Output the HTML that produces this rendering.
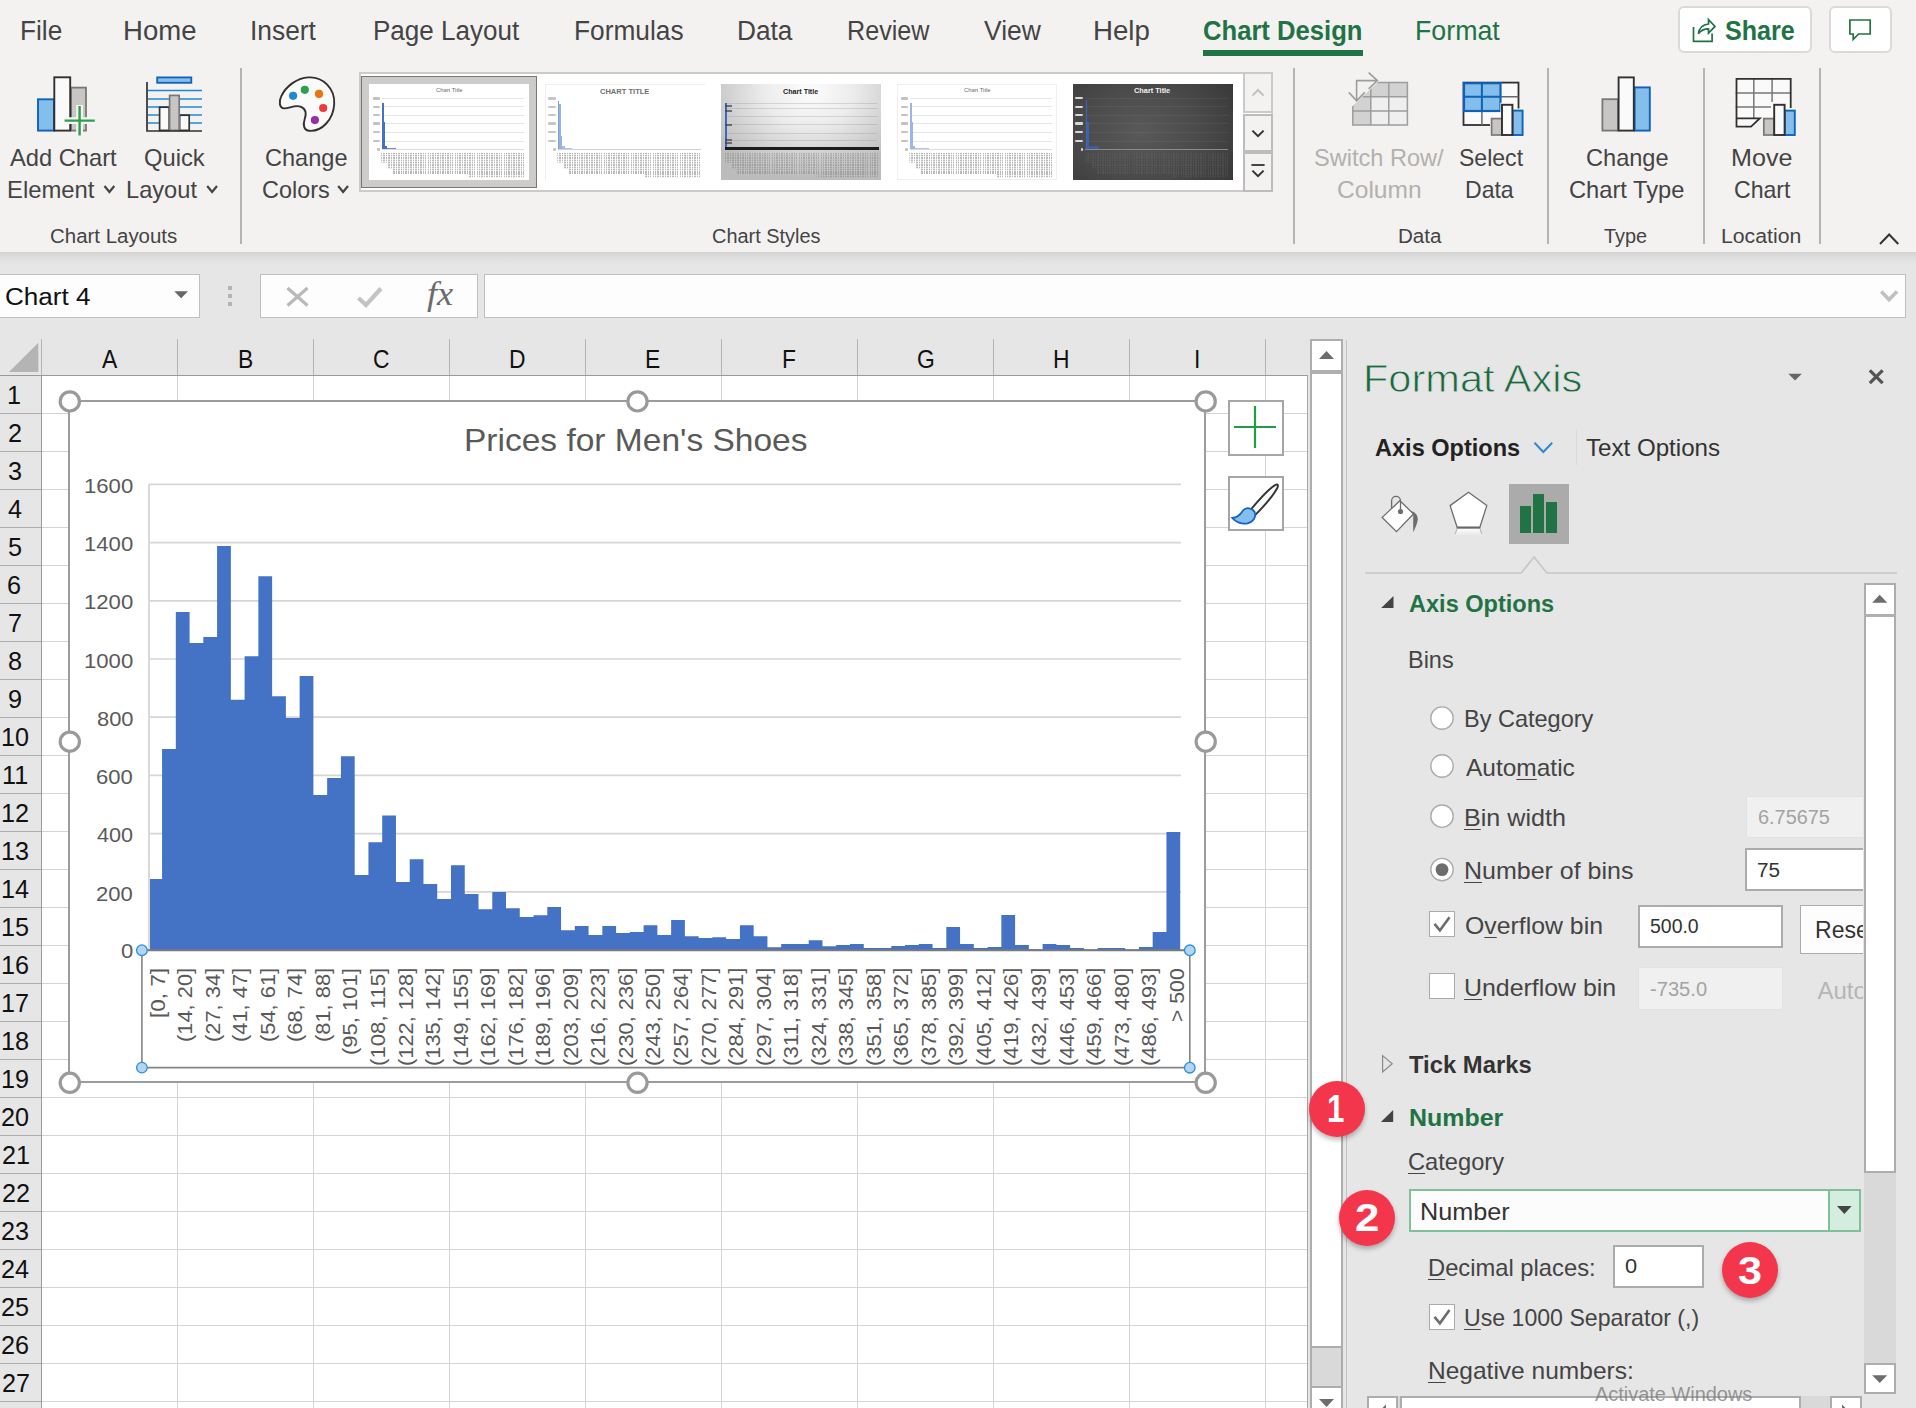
<!DOCTYPE html><html><head><meta charset="utf-8"><title>Excel</title><style>
*{margin:0;padding:0;box-sizing:border-box}
html,body{width:1916px;height:1408px;overflow:hidden;background:#e6e6e6}
body{position:relative;font-family:"Liberation Sans",sans-serif}
.a{position:absolute}
.t{position:absolute;white-space:nowrap;transform-origin:0 50%;font-family:"Liberation Sans",sans-serif}
svg{position:absolute;overflow:visible}
</style></head><body>
<div class="a" style="left:0px;top:0px;width:1916px;height:252px;background:#f3f2f1;"></div>
<div class="a" style="left:0px;top:252px;width:1916px;height:13px;background:linear-gradient(#d2d2d2,#dedede 40%,#e6e6e6);"></div>
<span class="t" style="left:19.90px;top:18px;font-size:27px;line-height:27px;color:#444;transform:scaleX(0.9717);">File</span>
<span class="t" style="left:123.10px;top:18px;font-size:27px;line-height:27px;color:#444;transform:scaleX(1.0201);">Home</span>
<span class="t" style="left:250.43px;top:18px;font-size:27px;line-height:27px;color:#444;transform:scaleX(0.9758);">Insert</span>
<span class="t" style="left:372.62px;top:18px;font-size:27px;line-height:27px;color:#444;transform:scaleX(0.9636);">Page Layout</span>
<span class="t" style="left:573.90px;top:18px;font-size:27px;line-height:27px;color:#444;transform:scaleX(0.9736);">Formulas</span>
<span class="t" style="left:737.30px;top:18px;font-size:27px;line-height:27px;color:#444;transform:scaleX(0.9716);">Data</span>
<span class="t" style="left:847.19px;top:18px;font-size:27px;line-height:27px;color:#444;transform:scaleX(0.9317);">Review</span>
<span class="t" style="left:984.20px;top:18px;font-size:27px;line-height:27px;color:#444;transform:scaleX(0.9783);">View</span>
<span class="t" style="left:1093.19px;top:18px;font-size:27px;line-height:27px;color:#444;transform:scaleX(1.0240);">Help</span>
<span class="t" style="left:1202.78px;top:18px;font-size:27px;line-height:27px;color:#217346;font-weight:bold;transform:scaleX(0.9489);">Chart Design</span>
<div class="a" style="left:1203px;top:50px;width:160px;height:5.5px;background:#217346;"></div>
<span class="t" style="left:1414.86px;top:18px;font-size:27px;line-height:27px;color:#217346;transform:scaleX(0.9916);">Format</span>
<div class="a" style="left:1678px;top:6px;width:134px;height:47px;background:#fff;border:2px solid #dcdad8;border-radius:6px;"></div>
<span class="t" style="left:1724.87px;top:18px;font-size:27px;line-height:27px;color:#217346;font-weight:bold;transform:scaleX(0.9296);">Share</span>
<div class="a" style="left:1829px;top:6px;width:63px;height:47px;background:#fff;border:2px solid #dcdad8;border-radius:6px;"></div>
<svg style="left:0;top:0" width="1" height="1" fill="none" stroke="#217346" stroke-width="1.7"><path d="M1693.5 27 V41.3 H1712.1 V33.4"/><path d="M1698.4 33.8 C1699 28.5 1702.5 24.6 1708.5 24 V19.6 L1715 26.4 L1708.5 33.2 V28.8 C1703.8 28.8 1700.6 30.6 1698.4 33.8 Z"/><path d="M1849.9 20 H1870.2 V34 H1858.6 L1853.2 39.4 V34 H1849.9 Z"/></svg>
<span class="t" style="left:10.30px;top:146px;font-size:24px;line-height:24px;color:#444;transform:scaleX(0.9870);">Add Chart</span>
<span class="t" style="left:7.09px;top:178px;font-size:24px;line-height:24px;color:#444;transform:scaleX(0.9937);">Element</span>
<span class="t" style="left:143.63px;top:146px;font-size:24px;line-height:24px;color:#444;transform:scaleX(0.9889);">Quick</span>
<span class="t" style="left:126.41px;top:178px;font-size:24px;line-height:24px;color:#444;transform:scaleX(0.9846);">Layout</span>
<span class="t" style="left:265.22px;top:146px;font-size:24px;line-height:24px;color:#444;transform:scaleX(0.9811);">Change</span>
<span class="t" style="left:261.53px;top:178px;font-size:24px;line-height:24px;color:#444;transform:scaleX(0.9759);">Colors</span>
<span class="t" style="left:1314.24px;top:146px;font-size:24px;line-height:24px;color:#b3b0ad;transform:scaleX(0.9821);">Switch Row/</span>
<span class="t" style="left:1336.97px;top:178px;font-size:24px;line-height:24px;color:#b3b0ad;transform:scaleX(1.0232);">Column</span>
<span class="t" style="left:1458.96px;top:146px;font-size:24px;line-height:24px;color:#444;transform:scaleX(0.9600);">Select</span>
<span class="t" style="left:1465.16px;top:178px;font-size:24px;line-height:24px;color:#444;transform:scaleX(0.9601);">Data</span>
<span class="t" style="left:1585.52px;top:146px;font-size:24px;line-height:24px;color:#444;transform:scaleX(0.9823);">Change</span>
<span class="t" style="left:1568.62px;top:178px;font-size:24px;line-height:24px;color:#444;transform:scaleX(0.9868);">Chart Type</span>
<span class="t" style="left:1731.39px;top:146px;font-size:24px;line-height:24px;color:#444;transform:scaleX(1.0466);">Move</span>
<span class="t" style="left:1733.85px;top:178px;font-size:24px;line-height:24px;color:#444;transform:scaleX(0.9621);">Chart</span>
<span class="t" style="left:49.68px;top:227px;font-size:19.5px;line-height:19.5px;color:#444;transform:scaleX(1.0481);">Chart Layouts</span>
<span class="t" style="left:712.40px;top:227px;font-size:19.5px;line-height:19.5px;color:#444;transform:scaleX(1.0209);">Chart Styles</span>
<span class="t" style="left:1398.45px;top:227px;font-size:19.5px;line-height:19.5px;color:#444;transform:scaleX(1.0556);">Data</span>
<span class="t" style="left:1604.30px;top:227px;font-size:19.5px;line-height:19.5px;color:#444;transform:scaleX(1.0207);">Type</span>
<span class="t" style="left:1721.30px;top:227px;font-size:19.5px;line-height:19.5px;color:#444;transform:scaleX(1.0889);">Location</span>
<div class="a" style="left:240px;top:68px;width:2px;height:176px;background:#b6b4b2;"></div>
<div class="a" style="left:1293px;top:68px;width:2px;height:176px;background:#b6b4b2;"></div>
<div class="a" style="left:1547px;top:68px;width:2px;height:176px;background:#b6b4b2;"></div>
<div class="a" style="left:1703px;top:68px;width:2px;height:176px;background:#b6b4b2;"></div>
<div class="a" style="left:1819px;top:68px;width:2px;height:176px;background:#b6b4b2;"></div>
<svg style="left:0;top:0" width="1" height="1"><path d="M104.5 186 L109.4 192 L114.3 186" fill="none" stroke="#444" stroke-width="2.2"/></svg>
<svg style="left:0;top:0" width="1" height="1"><path d="M207.2 186 L212.1 192 L217 186" fill="none" stroke="#444" stroke-width="2.2"/></svg>
<svg style="left:0;top:0" width="1" height="1"><path d="M338.2 186 L343.1 192 L348 186" fill="none" stroke="#444" stroke-width="2.2"/></svg>
<svg style="left:0;top:0" width="1" height="1"><path d="M1880 244 L1889.15 234.5 L1898.3 244" fill="none" stroke="#333" stroke-width="2"/></svg>
<div class="a" style="left:359px;top:72px;width:914px;height:120px;background:#fff;border:2px solid #cccac8;"></div>
<div class="a" style="left:1243px;top:72px;width:30px;height:41px;background:#f3f2f1;border:2px solid #cccac8;"></div>
<div class="a" style="left:1243px;top:114px;width:30px;height:38px;background:#f3f2f1;border:2px solid #bebcba;"></div>
<div class="a" style="left:1243px;top:152px;width:30px;height:40px;background:#f3f2f1;border:2px solid #bebcba;"></div>
<svg style="left:0;top:0" width="1" height="1" fill="none"><path d="M1252.4 95.6 L1258 90 L1263.6 95.6" stroke="#c3c1bf" stroke-width="2"/><path d="M1252.4 130.6 L1258 136.2 L1263.6 130.6" stroke="#323130" stroke-width="2"/><path d="M1251.4 165 H1264.6" stroke="#323130" stroke-width="1.8"/><path d="M1252.4 170.6 L1258 176.2 L1263.6 170.6" stroke="#323130" stroke-width="2"/></svg>
<div class="a" style="left:361.2px;top:76.4px;width:175.8px;height:111.6px;background:#cdccca;border:1.2px solid #777;"></div>
<div class="a" style="left:369.1px;top:84.3px;width:160px;height:95.3px;background:#fff;"></div><span class="t" style="left:435.81px;top:88px;font-size:5.6px;line-height:5.6px;color:#6a6a6a;transform:scaleX(1.0407);">Chart Title</span><div class="a" style="left:382.1px;top:98.0px;width:142px;height:0.9px;background:#e6e6e6;"></div><div class="a" style="left:382.1px;top:106.3px;width:142px;height:0.9px;background:#e6e6e6;"></div><div class="a" style="left:382.1px;top:114.89999999999999px;width:142px;height:0.9px;background:#e6e6e6;"></div><div class="a" style="left:382.1px;top:123.19999999999999px;width:142px;height:0.9px;background:#e6e6e6;"></div><div class="a" style="left:382.1px;top:131.79999999999998px;width:142px;height:0.9px;background:#e6e6e6;"></div><div class="a" style="left:382.1px;top:140.6px;width:142px;height:0.9px;background:#e6e6e6;"></div><div class="a" style="left:382.1px;top:149.1px;width:142px;height:0.9px;background:#dcdcdc;"></div><div class="a" style="left:372.6px;top:97.2px;width:7px;height:2.4px;background:#c2c2c2;border-radius:1px;"></div><div class="a" style="left:372.6px;top:105.5px;width:7px;height:2.4px;background:#c2c2c2;border-radius:1px;"></div><div class="a" style="left:372.6px;top:114.1px;width:7px;height:2.4px;background:#c2c2c2;border-radius:1px;"></div><div class="a" style="left:372.6px;top:122.39999999999999px;width:7px;height:2.4px;background:#c2c2c2;border-radius:1px;"></div><div class="a" style="left:372.6px;top:131.0px;width:7px;height:2.4px;background:#c2c2c2;border-radius:1px;"></div><div class="a" style="left:372.6px;top:139.8px;width:7px;height:2.4px;background:#c2c2c2;border-radius:1px;"></div><div class="a" style="left:372.6px;top:148.3px;width:2.5px;height:2.4px;background:#c2c2c2;border-radius:1px;left:377.1px;"></div><div class="a" style="left:382.1px;top:102.8px;width:1.5px;height:46.5px;background:#4472c4;"></div><div class="a" style="left:383.6px;top:122.4px;width:1.4px;height:27px;background:#4472c4;"></div><div class="a" style="left:385.0px;top:145.6px;width:1.5px;height:3.7px;background:#4472c4;"></div><div class="a" style="left:386.5px;top:148px;width:9px;height:1.3px;background:#4472c4;opacity:.8;"></div><div class="a" style="left:381.1px;top:153px;width:144.5px;height:24.6px;opacity:0.62;clip-path:polygon(0 0,100% 0,100% 100%,60% 100%,60% 85%,8% 85%,8% 65%,4% 65%,4% 40%,0 40%);background:repeating-linear-gradient(0deg,rgba(255,255,255,.65) 0 0.9px,transparent 0.9px 2.3px),repeating-linear-gradient(90deg,#909090 0 1.35px,transparent 1.35px 2.45px)"></div>
<div class="a" style="left:545.2px;top:84.3px;width:160px;height:95.3px;background:#fff;border:1px solid #ededed;border-bottom:none;border-right:none;"></div><span class="t" style="left:600.10px;top:89px;font-size:6.6px;line-height:6.6px;color:#6f6f6f;font-weight:bold;transform:scaleX(1.1418);">CHART TITLE</span><div class="a" style="left:548.2px;top:97.2px;width:7.5px;height:2.4px;background:#c6c6c6;border-radius:1px;"></div><div class="a" style="left:548.2px;top:105.5px;width:7.5px;height:2.4px;background:#c6c6c6;border-radius:1px;"></div><div class="a" style="left:548.2px;top:114.1px;width:7.5px;height:2.4px;background:#c6c6c6;border-radius:1px;"></div><div class="a" style="left:548.2px;top:122.39999999999999px;width:7.5px;height:2.4px;background:#c6c6c6;border-radius:1px;"></div><div class="a" style="left:548.2px;top:131.0px;width:7.5px;height:2.4px;background:#c6c6c6;border-radius:1px;"></div><div class="a" style="left:548.2px;top:139.8px;width:7.5px;height:2.4px;background:#c6c6c6;border-radius:1px;"></div><div class="a" style="left:548.2px;top:148.3px;width:2.5px;height:2.4px;background:#c6c6c6;border-radius:1px;left:553.2px;"></div><div class="a" style="left:558.2px;top:149px;width:143px;height:1px;background:#d2d2d2;"></div><div class="a" style="left:558.2px;top:101px;width:1.2px;height:48px;background:#7f9fd9;"></div><div class="a" style="left:559.4000000000001px;top:104px;width:1.3px;height:45px;background:#7f9fd9;opacity:.8;"></div><div class="a" style="left:560.7px;top:136px;width:1.4px;height:13px;background:#7f9fd9;opacity:.8;"></div><div class="a" style="left:562.1px;top:146px;width:2.5px;height:3px;background:#7f9fd9;opacity:.7;"></div><div class="a" style="left:564.6px;top:148px;width:7px;height:1.3px;background:#7f9fd9;opacity:.6;"></div><div class="a" style="left:557.2px;top:153px;width:144.5px;height:24.6px;opacity:0.62;clip-path:polygon(0 0,100% 0,100% 100%,60% 100%,60% 85%,8% 85%,8% 65%,4% 65%,4% 40%,0 40%);background:repeating-linear-gradient(0deg,rgba(255,255,255,.65) 0 0.9px,transparent 0.9px 2.3px),repeating-linear-gradient(90deg,#909090 0 1.35px,transparent 1.35px 2.45px)"></div>
<div class="a" style="left:721.4px;top:84.3px;width:159.6px;height:95.3px;background:radial-gradient(ellipse 70% 90% at 55% 8%,#fdfdfd 0,#ececec 40%,#cfcfcf 75%,#bcbcbc 100%);"></div><span class="t" style="left:783.11px;top:89px;font-size:6.8px;line-height:6.8px;color:#222;font-weight:bold;transform:scaleX(1.0512);">Chart Title</span><div class="a" style="left:725.4px;top:102.6px;width:152px;height:0.9px;background:rgba(140,140,140,.28);"></div><div class="a" style="left:725.4px;top:108.3px;width:152px;height:0.9px;background:rgba(140,140,140,.28);"></div><div class="a" style="left:725.4px;top:116.2px;width:152px;height:0.9px;background:rgba(140,140,140,.28);"></div><div class="a" style="left:725.4px;top:124.4px;width:152px;height:0.9px;background:rgba(140,140,140,.28);"></div><div class="a" style="left:725.4px;top:132.8px;width:152px;height:0.9px;background:rgba(140,140,140,.28);"></div><div class="a" style="left:725.4px;top:139.8px;width:152px;height:0.9px;background:rgba(140,140,140,.28);"></div><div class="a" style="left:725.1999999999999px;top:147px;width:153.4px;height:2.8px;background:#1c1c1c;"></div><div class="a" style="left:725.4px;top:102.6px;width:1.8px;height:44.5px;background:#3b66c4;"></div><div class="a" style="left:725.4px;top:104.6px;width:6.5px;height:2px;background:#444;opacity:.7;"></div><div class="a" style="left:725.4px;top:109.8px;width:6.5px;height:2px;background:#444;opacity:.7;"></div><div class="a" style="left:725.4px;top:123.8px;width:6.5px;height:2px;background:#444;opacity:.7;"></div><div class="a" style="left:725.4px;top:138.8px;width:6.5px;height:2px;background:#444;opacity:.7;"></div><div class="a" style="left:725.4px;top:142.4px;width:6.5px;height:2px;background:#444;opacity:.7;"></div><div class="a" style="left:724.9px;top:153px;width:153.0px;height:24.6px;opacity:0.42;clip-path:polygon(0 0,100% 0,100% 100%,60% 100%,60% 85%,8% 85%,8% 65%,4% 65%,4% 40%,0 40%);background:repeating-linear-gradient(0deg,rgba(200,200,200,.6) 0 0.9px,transparent 0.9px 2.3px),repeating-linear-gradient(90deg,#7a7a7a 0 1.35px,transparent 1.35px 2.45px)"></div>
<div class="a" style="left:897.3px;top:84.3px;width:160px;height:95.3px;background:#fff;border:1px solid #efefef;"></div><span class="t" style="left:964.01px;top:88px;font-size:5.6px;line-height:5.6px;color:#6a6a6a;transform:scaleX(1.0407);">Chart Title</span><div class="a" style="left:910.3px;top:98.0px;width:142px;height:0.9px;background:#e6e6e6;"></div><div class="a" style="left:910.3px;top:106.3px;width:142px;height:0.9px;background:#e6e6e6;"></div><div class="a" style="left:910.3px;top:114.89999999999999px;width:142px;height:0.9px;background:#e6e6e6;"></div><div class="a" style="left:910.3px;top:123.19999999999999px;width:142px;height:0.9px;background:#e6e6e6;"></div><div class="a" style="left:910.3px;top:131.79999999999998px;width:142px;height:0.9px;background:#e6e6e6;"></div><div class="a" style="left:910.3px;top:140.6px;width:142px;height:0.9px;background:#e6e6e6;"></div><div class="a" style="left:910.3px;top:149.1px;width:142px;height:0.9px;background:#dcdcdc;"></div><div class="a" style="left:900.8px;top:97.2px;width:7px;height:2.4px;background:#c2c2c2;border-radius:1px;"></div><div class="a" style="left:900.8px;top:105.5px;width:7px;height:2.4px;background:#c2c2c2;border-radius:1px;"></div><div class="a" style="left:900.8px;top:114.1px;width:7px;height:2.4px;background:#c2c2c2;border-radius:1px;"></div><div class="a" style="left:900.8px;top:122.39999999999999px;width:7px;height:2.4px;background:#c2c2c2;border-radius:1px;"></div><div class="a" style="left:900.8px;top:131.0px;width:7px;height:2.4px;background:#c2c2c2;border-radius:1px;"></div><div class="a" style="left:900.8px;top:139.8px;width:7px;height:2.4px;background:#c2c2c2;border-radius:1px;"></div><div class="a" style="left:900.8px;top:148.3px;width:2.5px;height:2.4px;background:#c2c2c2;border-radius:1px;left:905.3px;"></div><div class="a" style="left:910.3px;top:102.8px;width:1.5px;height:46.5px;background:#9db5e3;"></div><div class="a" style="left:911.8px;top:122.4px;width:1.4px;height:27px;background:#9db5e3;"></div><div class="a" style="left:913.1999999999999px;top:145.6px;width:1.5px;height:3.7px;background:#9db5e3;"></div><div class="a" style="left:914.6999999999999px;top:148px;width:14px;height:1.3px;background:#9db5e3;opacity:.8;"></div><div class="a" style="left:909.3px;top:153px;width:144.5px;height:24.6px;opacity:0.62;clip-path:polygon(0 0,100% 0,100% 100%,60% 100%,60% 85%,8% 85%,8% 65%,4% 65%,4% 40%,0 40%);background:repeating-linear-gradient(0deg,rgba(255,255,255,.65) 0 0.9px,transparent 0.9px 2.3px),repeating-linear-gradient(90deg,#909090 0 1.35px,transparent 1.35px 2.45px)"></div>
<div class="a" style="left:1073.3px;top:84.3px;width:159.8px;height:95.3px;background:radial-gradient(ellipse 80% 100% at 42% 50%,#595959 0,#4b4b4b 45%,#3a3a3a 85%,#303030 100%);"></div><span class="t" style="left:1134.41px;top:88px;font-size:6.8px;line-height:6.8px;color:#f2f2f2;font-weight:bold;transform:scaleX(1.0814);">Chart Title</span><div class="a" style="left:1085.3px;top:98.0px;width:143px;height:0.9px;background:rgba(255,255,255,.05);"></div><div class="a" style="left:1085.3px;top:106.3px;width:143px;height:0.9px;background:rgba(255,255,255,.05);"></div><div class="a" style="left:1085.3px;top:114.89999999999999px;width:143px;height:0.9px;background:rgba(255,255,255,.05);"></div><div class="a" style="left:1085.3px;top:123.19999999999999px;width:143px;height:0.9px;background:rgba(255,255,255,.05);"></div><div class="a" style="left:1085.3px;top:131.79999999999998px;width:143px;height:0.9px;background:rgba(255,255,255,.05);"></div><div class="a" style="left:1085.3px;top:140.6px;width:143px;height:0.9px;background:rgba(255,255,255,.05);"></div><div class="a" style="left:1085.3px;top:149.0px;width:143px;height:1.1px;background:#8c8c8c;"></div><div class="a" style="left:1075.3px;top:97.2px;width:8px;height:2.3px;background:#d8d8d8;border-radius:1px;"></div><div class="a" style="left:1075.3px;top:105.5px;width:8px;height:2.3px;background:#d8d8d8;border-radius:1px;"></div><div class="a" style="left:1075.3px;top:114.1px;width:8px;height:2.3px;background:#d8d8d8;border-radius:1px;"></div><div class="a" style="left:1075.3px;top:122.39999999999999px;width:8px;height:2.3px;background:#d8d8d8;border-radius:1px;"></div><div class="a" style="left:1075.3px;top:131.0px;width:8px;height:2.3px;background:#d8d8d8;border-radius:1px;"></div><div class="a" style="left:1075.3px;top:139.8px;width:8px;height:2.3px;background:#d8d8d8;border-radius:1px;"></div><div class="a" style="left:1075.3px;top:148.3px;width:2.5px;height:2.3px;background:#d8d8d8;border-radius:1px;left:1080.8px;"></div><div class="a" style="left:1085.8999999999999px;top:100px;width:1.4px;height:49px;background:#3b66c4;"></div><div class="a" style="left:1087.3px;top:122px;width:1.4px;height:27px;background:#3b66c4;opacity:.8;"></div><div class="a" style="left:1088.7px;top:146px;width:10px;height:3px;background:#3b66c4;opacity:.6;"></div><div class="a" style="left:1085.3px;top:153px;width:144.5px;height:24.6px;opacity:0.22;clip-path:polygon(0 0,100% 0,100% 100%,60% 100%,60% 85%,8% 85%,8% 65%,4% 65%,4% 40%,0 40%);background:repeating-linear-gradient(0deg,rgba(70,70,70,.6) 0 0.9px,transparent 0.9px 2.3px),repeating-linear-gradient(90deg,#7a7a7a 0 1.35px,transparent 1.35px 2.45px)"></div>
<svg style="left:0;top:0" width="1" height="1"><rect x="38" y="99.3" width="16.00" height="31.30" fill="#83beec" stroke="#0f62b8" stroke-width="1.9" /><rect x="71" y="87.6" width="15.00" height="43.00" fill="#c8c6c4" stroke="#797775" stroke-width="1.8" /><rect x="54.3" y="77.3" width="15.90" height="53.30" fill="#fafafa" stroke="#323130" stroke-width="1.9" /><path d="M79.6 105 V136 M64 120.6 H95.2" stroke="#f5f4f3" stroke-width="6.8" fill="none"/><path d="M79.6 106 V135.6 M64.6 120.6 H94.8" stroke="#2e9e4f" stroke-width="2.4" fill="none"/><rect x="157.2" y="77.4" width="34.10" height="5.40" fill="#83beec" stroke="#0f62b8" stroke-width="1.8" /><path d="M148 90.4 H202" stroke="#1e88d6" stroke-width="1.5"/><path d="M148 98.9 H202" stroke="#1e88d6" stroke-width="1.5"/><path d="M148 107 H202" stroke="#1e88d6" stroke-width="1.5"/><path d="M148 114.9 H202" stroke="#1e88d6" stroke-width="1.5"/><path d="M148 122.9 H202" stroke="#1e88d6" stroke-width="1.5"/><rect x="159.6" y="107.2" width="9.60" height="23.20" fill="#fafafa" stroke="#323130" stroke-width="1.7" /><rect x="179.6" y="115.2" width="9.60" height="15.20" fill="#fafafa" stroke="#323130" stroke-width="1.7" /><rect x="169.6" y="95.4" width="9.60" height="35.00" fill="#c8c6c4" stroke="#797775" stroke-width="1.7" /><path d="M147 82 V131 H202" stroke="#323130" stroke-width="1.7" fill="none"/><path d="M308.5 77.4 C323 76.4 335.2 88.6 334.2 104 C333.4 119.5 322 131.6 309.5 130.8 C303.5 130.4 303 124.5 304.6 119.5 C306.6 113.5 305.5 108.4 300.6 106.6 C294.6 104.6 289 108.6 284.2 108.4 C279.4 108 278.6 101.6 281.2 96.4 C286 86.2 296.4 78.2 308.5 77.4 Z" fill="#fafafa" stroke="#323130" stroke-width="1.9"/><circle cx="293.1" cy="95.8" r="4.1" fill="#1e88d6"/><circle cx="304.8" cy="89.8" r="4.1" fill="#2e9e4f"/><circle cx="319" cy="93.9" r="4.1" fill="#e8760c"/><circle cx="323.2" cy="108" r="4.1" fill="#ef3b3b"/><circle cx="314.9" cy="120.1" r="4.1" fill="#962fa6"/><rect x="1352.8" y="82.6" width="54.6" height="42.4" fill="#efefef" stroke="none"/><rect x="1352.8" y="82.6" width="54.6" height="14.2" fill="#d2d2d2"/><rect x="1352.8" y="82.6" width="18" height="42.4" fill="#d2d2d2"/><path d="M1352.8 82.6 H1407.4 V125 H1352.8 Z M1370.8 82.6 V125 M1388.8 82.6 V125 M1352.8 96.8 H1407.4 M1352.8 111 H1407.4" fill="none" stroke="#9d9d9d" stroke-width="1.5"/><path d="M1346 76 H1384.5 L1349.5 109 H1346 Z" fill="#f3f2f1"/><path d="M1377 80.6 H1356.6 V100.6 M1368.6 72.6 L1377.4 80.6 L1368.6 88.8 M1348.8 92.4 L1356.6 100.8 L1364.8 92.4" fill="none" stroke="#9d9d9d" stroke-width="1.6"/><rect x="1463.5" y="82.6" width="55.00" height="42.40" fill="#fafafa" stroke="#323130" stroke-width="1.8" /><path d="M1500 96.8 H1518.5 M1481.9 111 V125" stroke="#6b6967" stroke-width="1.5"/><rect x="1464" y="83.2" width="36.50" height="27.80" fill="#83beec" stroke="#0f62b8" stroke-width="2.2" /><path d="M1481.9 83 V111 M1464 96.8 H1500.5" stroke="#0f62b8" stroke-width="2"/><rect x="1489.1" y="102.4" width="35" height="35" fill="#f3f2f1" opacity="0"/><path d="M1490.0 116.6 H1500.3999999999999 V102.8 H1514.1999999999998 V108.6 H1524.3999999999999 V137 H1490.0 Z" fill="#f6f5f4"/><rect x="1491.6" y="118.6" width="10.20" height="16.40" fill="#c8c6c4" stroke="#797775" stroke-width="1.7" /><rect x="1512.6" y="110.6" width="10.00" height="24.40" fill="#83beec" stroke="#0f62b8" stroke-width="1.9" /><rect x="1502.0" y="104.8" width="10.40" height="30.20" fill="#fafafa" stroke="#323130" stroke-width="1.9" /><rect x="1602.4" y="99.2" width="15.60" height="31.40" fill="#c8c6c4" stroke="#797775" stroke-width="1.8" /><rect x="1634.6" y="87.4" width="15.20" height="43.20" fill="#83beec" stroke="#0f62b8" stroke-width="1.9" /><rect x="1618.6" y="77.4" width="15.20" height="53.20" fill="#fafafa" stroke="#323130" stroke-width="1.9" /><path d="M1735.7 78.2 H1790.7 V127.4 H1735.7 Z" fill="#fafafa" stroke="none"/><path d="M1753.8 78.2 V118.4 M1772.1 78.2 V102 M1735.7 93 H1790.7 M1735.7 107 H1771" stroke="#797775" stroke-width="1.5" fill="none"/><path d="M1751 128.4 H1791.6 V118 H1761.6 Z" fill="#f3f2f1"/><path d="M1790.7 108 V78.9 H1736.5 V126.6 H1751 L1759.8 118.4 H1736.5" fill="none" stroke="#323130" stroke-width="1.8"/><rect x="1761.3" y="102.4" width="35" height="35" fill="#f3f2f1" opacity="0"/><path d="M1762.2 116.6 H1772.6 V102.8 H1786.3999999999999 V108.6 H1796.6 V137 H1762.2 Z" fill="#f6f5f4"/><rect x="1763.8" y="118.6" width="10.20" height="16.40" fill="#c8c6c4" stroke="#797775" stroke-width="1.7" /><rect x="1784.8" y="110.6" width="10.00" height="24.40" fill="#83beec" stroke="#0f62b8" stroke-width="1.9" /><rect x="1774.2" y="104.8" width="10.40" height="30.20" fill="#fafafa" stroke="#323130" stroke-width="1.9" /></svg>
<div class="a" style="left:0px;top:274px;width:200px;height:44px;background:#fdfdfd;border:1px solid #c0c0c0;border-left:none;"></div>
<span class="t" style="left:5.20px;top:286px;font-size:23.5px;line-height:23.5px;color:#111;transform:scaleX(1.1085);">Chart 4</span>
<svg style="left:0;top:0" width="1" height="1"><path d="M174.3 291.3 L188 291.3 L181.15 298.3 Z" fill="#666"/></svg>
<div class="a" style="left:228px;top:285.7px;width:4.2px;height:4.2px;background:#b4b4b4;"></div>
<div class="a" style="left:228px;top:293.7px;width:4.2px;height:4.2px;background:#b4b4b4;"></div>
<div class="a" style="left:228px;top:301.6px;width:4.2px;height:4.2px;background:#b4b4b4;"></div>
<div class="a" style="left:260px;top:274px;width:218px;height:44px;background:#fdfdfd;border:1px solid #c0c0c0;"></div>
<svg style="left:0;top:0" width="1" height="1"><path d="M287.5 288 L307.5 305.5 M307.5 288 L287.5 305.5" stroke="#b9b9b9" stroke-width="3.2" fill="none"/><path d="M358.5 298 L366 305 L381 288.5" stroke="#c3c3c3" stroke-width="4.2" fill="none"/></svg>
<span class="t" style="left:427.14px;top:277px;font-size:34px;line-height:34px;color:#6b6b6b;font-style:italic;font-family:'Liberation Serif',serif;transform:scaleX(1.0683);">fx</span>
<div class="a" style="left:484px;top:274px;width:1422px;height:44px;background:#fdfdfd;border:1px solid #c0c0c0;"></div>
<svg style="left:0;top:0" width="1" height="1"><path d="M1881.2 291.5 L1889.1 299.6 L1897 291.5" fill="none" stroke="#c0c0c0" stroke-width="3.6"/></svg>
<div class="a" style="left:41px;top:376px;width:1267px;height:1032px;background:#fff;"></div>
<div class="a" style="left:177px;top:339px;width:1px;height:1069px;background:#d4d4d4;"></div><div class="a" style="left:313px;top:339px;width:1px;height:1069px;background:#d4d4d4;"></div><div class="a" style="left:449px;top:339px;width:1px;height:1069px;background:#d4d4d4;"></div><div class="a" style="left:585px;top:339px;width:1px;height:1069px;background:#d4d4d4;"></div><div class="a" style="left:721px;top:339px;width:1px;height:1069px;background:#d4d4d4;"></div><div class="a" style="left:857px;top:339px;width:1px;height:1069px;background:#d4d4d4;"></div><div class="a" style="left:993px;top:339px;width:1px;height:1069px;background:#d4d4d4;"></div><div class="a" style="left:1129px;top:339px;width:1px;height:1069px;background:#d4d4d4;"></div><div class="a" style="left:1265px;top:339px;width:1px;height:1069px;background:#d4d4d4;"></div><div class="a" style="left:0px;top:413px;width:1307px;height:1px;background:#d4d4d4;"></div><div class="a" style="left:0px;top:451px;width:1307px;height:1px;background:#d4d4d4;"></div><div class="a" style="left:0px;top:489px;width:1307px;height:1px;background:#d4d4d4;"></div><div class="a" style="left:0px;top:527px;width:1307px;height:1px;background:#d4d4d4;"></div><div class="a" style="left:0px;top:565px;width:1307px;height:1px;background:#d4d4d4;"></div><div class="a" style="left:0px;top:603px;width:1307px;height:1px;background:#d4d4d4;"></div><div class="a" style="left:0px;top:641px;width:1307px;height:1px;background:#d4d4d4;"></div><div class="a" style="left:0px;top:679px;width:1307px;height:1px;background:#d4d4d4;"></div><div class="a" style="left:0px;top:717px;width:1307px;height:1px;background:#d4d4d4;"></div><div class="a" style="left:0px;top:755px;width:1307px;height:1px;background:#d4d4d4;"></div><div class="a" style="left:0px;top:793px;width:1307px;height:1px;background:#d4d4d4;"></div><div class="a" style="left:0px;top:831px;width:1307px;height:1px;background:#d4d4d4;"></div><div class="a" style="left:0px;top:869px;width:1307px;height:1px;background:#d4d4d4;"></div><div class="a" style="left:0px;top:907px;width:1307px;height:1px;background:#d4d4d4;"></div><div class="a" style="left:0px;top:945px;width:1307px;height:1px;background:#d4d4d4;"></div><div class="a" style="left:0px;top:983px;width:1307px;height:1px;background:#d4d4d4;"></div><div class="a" style="left:0px;top:1021px;width:1307px;height:1px;background:#d4d4d4;"></div><div class="a" style="left:0px;top:1059px;width:1307px;height:1px;background:#d4d4d4;"></div><div class="a" style="left:0px;top:1097px;width:1307px;height:1px;background:#d4d4d4;"></div><div class="a" style="left:0px;top:1135px;width:1307px;height:1px;background:#d4d4d4;"></div><div class="a" style="left:0px;top:1173px;width:1307px;height:1px;background:#d4d4d4;"></div><div class="a" style="left:0px;top:1211px;width:1307px;height:1px;background:#d4d4d4;"></div><div class="a" style="left:0px;top:1249px;width:1307px;height:1px;background:#d4d4d4;"></div><div class="a" style="left:0px;top:1287px;width:1307px;height:1px;background:#d4d4d4;"></div><div class="a" style="left:0px;top:1325px;width:1307px;height:1px;background:#d4d4d4;"></div><div class="a" style="left:0px;top:1363px;width:1307px;height:1px;background:#d4d4d4;"></div><div class="a" style="left:0px;top:1401px;width:1307px;height:1px;background:#d4d4d4;"></div>
<div class="a" style="left:0px;top:339px;width:1307px;height:36.5px;background:#e6e6e6;"></div>
<div class="a" style="left:0px;top:376px;width:41px;height:1032px;background:#e6e6e6;"></div>
<div class="a" style="left:41px;top:339px;width:1px;height:37px;background:#b4b4b4;"></div>
<div class="a" style="left:177px;top:339px;width:1px;height:37px;background:#b4b4b4;"></div>
<div class="a" style="left:313px;top:339px;width:1px;height:37px;background:#b4b4b4;"></div>
<div class="a" style="left:449px;top:339px;width:1px;height:37px;background:#b4b4b4;"></div>
<div class="a" style="left:585px;top:339px;width:1px;height:37px;background:#b4b4b4;"></div>
<div class="a" style="left:721px;top:339px;width:1px;height:37px;background:#b4b4b4;"></div>
<div class="a" style="left:857px;top:339px;width:1px;height:37px;background:#b4b4b4;"></div>
<div class="a" style="left:993px;top:339px;width:1px;height:37px;background:#b4b4b4;"></div>
<div class="a" style="left:1129px;top:339px;width:1px;height:37px;background:#b4b4b4;"></div>
<div class="a" style="left:1265px;top:339px;width:1px;height:37px;background:#b4b4b4;"></div>
<div class="a" style="left:0px;top:413px;width:41px;height:1px;background:#adadad;"></div>
<div class="a" style="left:0px;top:451px;width:41px;height:1px;background:#adadad;"></div>
<div class="a" style="left:0px;top:489px;width:41px;height:1px;background:#adadad;"></div>
<div class="a" style="left:0px;top:527px;width:41px;height:1px;background:#adadad;"></div>
<div class="a" style="left:0px;top:565px;width:41px;height:1px;background:#adadad;"></div>
<div class="a" style="left:0px;top:603px;width:41px;height:1px;background:#adadad;"></div>
<div class="a" style="left:0px;top:641px;width:41px;height:1px;background:#adadad;"></div>
<div class="a" style="left:0px;top:679px;width:41px;height:1px;background:#adadad;"></div>
<div class="a" style="left:0px;top:717px;width:41px;height:1px;background:#adadad;"></div>
<div class="a" style="left:0px;top:755px;width:41px;height:1px;background:#adadad;"></div>
<div class="a" style="left:0px;top:793px;width:41px;height:1px;background:#adadad;"></div>
<div class="a" style="left:0px;top:831px;width:41px;height:1px;background:#adadad;"></div>
<div class="a" style="left:0px;top:869px;width:41px;height:1px;background:#adadad;"></div>
<div class="a" style="left:0px;top:907px;width:41px;height:1px;background:#adadad;"></div>
<div class="a" style="left:0px;top:945px;width:41px;height:1px;background:#adadad;"></div>
<div class="a" style="left:0px;top:983px;width:41px;height:1px;background:#adadad;"></div>
<div class="a" style="left:0px;top:1021px;width:41px;height:1px;background:#adadad;"></div>
<div class="a" style="left:0px;top:1059px;width:41px;height:1px;background:#adadad;"></div>
<div class="a" style="left:0px;top:1097px;width:41px;height:1px;background:#adadad;"></div>
<div class="a" style="left:0px;top:1135px;width:41px;height:1px;background:#adadad;"></div>
<div class="a" style="left:0px;top:1173px;width:41px;height:1px;background:#adadad;"></div>
<div class="a" style="left:0px;top:1211px;width:41px;height:1px;background:#adadad;"></div>
<div class="a" style="left:0px;top:1249px;width:41px;height:1px;background:#adadad;"></div>
<div class="a" style="left:0px;top:1287px;width:41px;height:1px;background:#adadad;"></div>
<div class="a" style="left:0px;top:1325px;width:41px;height:1px;background:#adadad;"></div>
<div class="a" style="left:0px;top:1363px;width:41px;height:1px;background:#adadad;"></div>
<div class="a" style="left:0px;top:1401px;width:41px;height:1px;background:#adadad;"></div>
<div class="a" style="left:0px;top:375px;width:1308px;height:1px;background:#9a9a9a;"></div>
<div class="a" style="left:40.5px;top:376px;width:1.5px;height:1032px;background:#9b9b9b;"></div>
<div class="a" style="left:1307px;top:375px;width:1.2px;height:1033px;background:#a6a6a6;"></div>
<svg style="left:0;top:0" width="1" height="1"><path d="M9 372 L38.3 372 L38.3 342.7 Z" fill="#b4b4b4"/></svg>
<span class="t" style="left:101.89px;top:346px;font-size:26px;line-height:26px;color:#111;transform:scaleX(0.8800);">A</span>
<span class="t" style="left:237.55px;top:346px;font-size:26px;line-height:26px;color:#111;transform:scaleX(0.8800);">B</span>
<span class="t" style="left:373.09px;top:346px;font-size:26px;line-height:26px;color:#111;transform:scaleX(0.8800);">C</span>
<span class="t" style="left:508.86px;top:346px;font-size:26px;line-height:26px;color:#111;transform:scaleX(0.8800);">D</span>
<span class="t" style="left:645.43px;top:346px;font-size:26px;line-height:26px;color:#111;transform:scaleX(0.8800);">E</span>
<span class="t" style="left:782.00px;top:346px;font-size:26px;line-height:26px;color:#111;transform:scaleX(0.8800);">F</span>
<span class="t" style="left:916.86px;top:346px;font-size:26px;line-height:26px;color:#111;transform:scaleX(0.8800);">G</span>
<span class="t" style="left:1053.20px;top:346px;font-size:26px;line-height:26px;color:#111;transform:scaleX(0.8800);">H</span>
<span class="t" style="left:1194.29px;top:346px;font-size:26px;line-height:26px;color:#111;transform:scaleX(0.8800);">I</span>
<span class="t" style="left:7.22px;top:382px;font-size:26px;line-height:26px;color:#111;transform:scaleX(0.9700);">1</span>
<span class="t" style="left:7.53px;top:420px;font-size:26px;line-height:26px;color:#111;transform:scaleX(0.9700);">2</span>
<span class="t" style="left:7.66px;top:458px;font-size:26px;line-height:26px;color:#111;transform:scaleX(0.9700);">3</span>
<span class="t" style="left:7.66px;top:496px;font-size:26px;line-height:26px;color:#111;transform:scaleX(0.9700);">4</span>
<span class="t" style="left:7.60px;top:534px;font-size:26px;line-height:26px;color:#111;transform:scaleX(0.9700);">5</span>
<span class="t" style="left:7.47px;top:572px;font-size:26px;line-height:26px;color:#111;transform:scaleX(0.9700);">6</span>
<span class="t" style="left:7.53px;top:610px;font-size:26px;line-height:26px;color:#111;transform:scaleX(0.9700);">7</span>
<span class="t" style="left:7.60px;top:648px;font-size:26px;line-height:26px;color:#111;transform:scaleX(0.9700);">8</span>
<span class="t" style="left:7.60px;top:686px;font-size:26px;line-height:26px;color:#111;transform:scaleX(0.9700);">9</span>
<span class="t" style="left:1.10px;top:724px;font-size:26px;line-height:26px;color:#111;transform:scaleX(0.9700);">10</span>
<span class="t" style="left:2.17px;top:762px;font-size:26px;line-height:26px;color:#111;transform:scaleX(0.9700);">11</span>
<span class="t" style="left:1.22px;top:800px;font-size:26px;line-height:26px;color:#111;transform:scaleX(0.9700);">12</span>
<span class="t" style="left:1.16px;top:838px;font-size:26px;line-height:26px;color:#111;transform:scaleX(0.9700);">13</span>
<span class="t" style="left:0.97px;top:876px;font-size:26px;line-height:26px;color:#111;transform:scaleX(0.9700);">14</span>
<span class="t" style="left:1.16px;top:914px;font-size:26px;line-height:26px;color:#111;transform:scaleX(0.9700);">15</span>
<span class="t" style="left:1.16px;top:952px;font-size:26px;line-height:26px;color:#111;transform:scaleX(0.9700);">16</span>
<span class="t" style="left:1.22px;top:990px;font-size:26px;line-height:26px;color:#111;transform:scaleX(0.9700);">17</span>
<span class="t" style="left:1.16px;top:1028px;font-size:26px;line-height:26px;color:#111;transform:scaleX(0.9700);">18</span>
<span class="t" style="left:1.22px;top:1066px;font-size:26px;line-height:26px;color:#111;transform:scaleX(0.9700);">19</span>
<span class="t" style="left:1.41px;top:1104px;font-size:26px;line-height:26px;color:#111;transform:scaleX(0.9700);">20</span>
<span class="t" style="left:1.54px;top:1142px;font-size:26px;line-height:26px;color:#111;transform:scaleX(0.9700);">21</span>
<span class="t" style="left:1.54px;top:1180px;font-size:26px;line-height:26px;color:#111;transform:scaleX(0.9700);">22</span>
<span class="t" style="left:1.48px;top:1218px;font-size:26px;line-height:26px;color:#111;transform:scaleX(0.9700);">23</span>
<span class="t" style="left:1.29px;top:1256px;font-size:26px;line-height:26px;color:#111;transform:scaleX(0.9700);">24</span>
<span class="t" style="left:1.48px;top:1294px;font-size:26px;line-height:26px;color:#111;transform:scaleX(0.9700);">25</span>
<span class="t" style="left:1.48px;top:1332px;font-size:26px;line-height:26px;color:#111;transform:scaleX(0.9700);">26</span>
<span class="t" style="left:1.54px;top:1370px;font-size:26px;line-height:26px;color:#111;transform:scaleX(0.9700);">27</span>
<div class="a" style="left:68px;top:400px;width:1138px;height:683px;background:#fff;border:2px solid #9c9c9c;"></div>
<span class="t" style="left:464.32px;top:425px;font-size:31.5px;line-height:31.5px;color:#595959;transform:scaleX(1.0638);">Prices for Men's Shoes</span>
<svg style="left:0;top:0" width="1" height="1"><path d="M149 484.4 H1181" stroke="#d6d6d6" stroke-width="1.7"/><path d="M149 542.6 H1181" stroke="#d6d6d6" stroke-width="1.7"/><path d="M149 600.8 H1181" stroke="#d6d6d6" stroke-width="1.7"/><path d="M149 659.0 H1181" stroke="#d6d6d6" stroke-width="1.7"/><path d="M149 717.2 H1181" stroke="#d6d6d6" stroke-width="1.7"/><path d="M149 775.4 H1181" stroke="#d6d6d6" stroke-width="1.7"/><path d="M149 833.6 H1181" stroke="#d6d6d6" stroke-width="1.7"/><path d="M149 891.8 H1181" stroke="#d6d6d6" stroke-width="1.7"/></svg>
<span class="t" style="left:83.74px;top:476px;font-size:20.3px;line-height:20.3px;color:#595959;transform:scaleX(1.0910);">1600</span>
<span class="t" style="left:83.74px;top:534px;font-size:20.3px;line-height:20.3px;color:#595959;transform:scaleX(1.0910);">1400</span>
<span class="t" style="left:83.74px;top:592px;font-size:20.3px;line-height:20.3px;color:#595959;transform:scaleX(1.0910);">1200</span>
<span class="t" style="left:83.74px;top:651px;font-size:20.3px;line-height:20.3px;color:#595959;transform:scaleX(1.0910);">1000</span>
<span class="t" style="left:96.52px;top:709px;font-size:20.3px;line-height:20.3px;color:#595959;transform:scaleX(1.0791);">800</span>
<span class="t" style="left:96.30px;top:767px;font-size:20.3px;line-height:20.3px;color:#595959;transform:scaleX(1.0859);">600</span>
<span class="t" style="left:96.97px;top:825px;font-size:20.3px;line-height:20.3px;color:#595959;transform:scaleX(1.0657);">400</span>
<span class="t" style="left:96.30px;top:884px;font-size:20.3px;line-height:20.3px;color:#595959;transform:scaleX(1.0859);">200</span>
<span class="t" style="left:120.73px;top:941px;font-size:20.3px;line-height:20.3px;color:#595959;transform:scaleX(1.0878);">0</span>
<svg style="left:0;top:0" width="1" height="1"><path d="M148.30 950.0 L148.30 879.1 L162.06 879.1 L162.06 748.9 L175.82 748.9 L175.82 612.0 L189.58 612.0 L189.58 643.0 L203.33 643.0 L203.33 637.1 L217.09 637.1 L217.09 545.9 L230.85 545.9 L230.85 699.8 L244.61 699.8 L244.61 656.3 L258.37 656.3 L258.37 576.2 L272.13 576.2 L272.13 696.3 L285.89 696.3 L285.89 717.9 L299.65 717.9 L299.65 676.1 L313.40 676.1 L313.40 794.9 L327.16 794.9 L327.16 778.1 L340.92 778.1 L340.92 756.2 L354.68 756.2 L354.68 874.9 L368.44 874.9 L368.44 842.2 L382.20 842.2 L382.20 815.4 L395.96 815.4 L395.96 881.9 L409.71 881.9 L409.71 859.3 L423.47 859.3 L423.47 884.0 L437.23 884.0 L437.23 899.0 L450.99 899.0 L450.99 865.2 L464.75 865.2 L464.75 894.1 L478.51 894.1 L478.51 909.2 L492.27 909.2 L492.27 892.1 L506.03 892.1 L506.03 908.2 L519.78 908.2 L519.78 917.1 L533.54 917.1 L533.54 915.2 L547.30 915.2 L547.30 906.9 L561.06 906.9 L561.06 930.2 L574.82 930.2 L574.82 926.1 L588.58 926.1 L588.58 935.1 L602.34 935.1 L602.34 926.1 L616.09 926.1 L616.09 933.1 L629.85 933.1 L629.85 932.1 L643.61 932.1 L643.61 925.2 L657.37 925.2 L657.37 935.1 L671.13 935.1 L671.13 920.1 L684.89 920.1 L684.89 936.2 L698.65 936.2 L698.65 938.1 L712.41 938.1 L712.41 937.2 L726.16 937.2 L726.16 939.1 L739.92 939.1 L739.92 925.2 L753.68 925.2 L753.68 936.2 L767.44 936.2 L767.44 947.3 L781.20 947.3 L781.20 944.1 L794.96 944.1 L794.96 944.1 L808.72 944.1 L808.72 940.2 L822.47 940.2 L822.47 946.3 L836.23 946.3 L836.23 945.1 L849.99 945.1 L849.99 944.0 L863.75 944.0 L863.75 947.9 L877.51 947.9 L877.51 947.9 L891.27 947.9 L891.27 945.9 L905.03 945.9 L905.03 945.1 L918.79 945.1 L918.79 944.0 L932.54 944.0 L932.54 947.9 L946.30 947.9 L946.30 927.0 L960.06 927.0 L960.06 944.0 L973.82 944.0 L973.82 947.9 L987.58 947.9 L987.58 946.9 L1001.34 946.9 L1001.34 915.0 L1015.10 915.0 L1015.10 945.1 L1028.85 945.1 L1028.85 949.2 L1042.61 949.2 L1042.61 944.0 L1056.37 944.0 L1056.37 945.1 L1070.13 945.1 L1070.13 947.9 L1083.89 947.9 L1083.89 949.5 L1097.65 949.5 L1097.65 947.9 L1111.41 947.9 L1111.41 947.9 L1125.17 947.9 L1125.17 949.5 L1138.92 949.5 L1138.92 946.9 L1152.68 946.9 L1152.68 932.0 L1166.44 932.0 L1166.44 832.0 L1180.20 832.0 L1180.20 950.0 Z" fill="#4472c4"/></svg>
<div class="a" style="left:148.3px;top:483.6px;width:1.5px;height:466px;background:#d9d9d9;"></div>
<span class="t" style="left:147.70px;top:1017.78px;font-size:20.4px;line-height:20.4px;color:#595959;transform-origin:0 0;transform:rotate(-90deg) scaleX(1.1031)">[0, 7]</span>
<span class="t" style="left:175.24px;top:1042.01px;font-size:20.4px;line-height:20.4px;color:#595959;transform-origin:0 0;transform:rotate(-90deg) scaleX(1.0724)">(14, 20]</span>
<span class="t" style="left:202.78px;top:1042.01px;font-size:20.4px;line-height:20.4px;color:#595959;transform-origin:0 0;transform:rotate(-90deg) scaleX(1.0724)">(27, 34]</span>
<span class="t" style="left:230.32px;top:1042.01px;font-size:20.4px;line-height:20.4px;color:#595959;transform-origin:0 0;transform:rotate(-90deg) scaleX(1.0724)">(41, 47]</span>
<span class="t" style="left:257.86px;top:1042.01px;font-size:20.4px;line-height:20.4px;color:#595959;transform-origin:0 0;transform:rotate(-90deg) scaleX(1.0724)">(54, 61]</span>
<span class="t" style="left:285.40px;top:1042.01px;font-size:20.4px;line-height:20.4px;color:#595959;transform-origin:0 0;transform:rotate(-90deg) scaleX(1.0724)">(68, 74]</span>
<span class="t" style="left:312.94px;top:1042.01px;font-size:20.4px;line-height:20.4px;color:#595959;transform-origin:0 0;transform:rotate(-90deg) scaleX(1.0724)">(81, 88]</span>
<span class="t" style="left:340.48px;top:1054.62px;font-size:20.4px;line-height:20.4px;color:#595959;transform-origin:0 0;transform:rotate(-90deg) scaleX(1.0783)">(95, 101]</span>
<span class="t" style="left:368.02px;top:1066.03px;font-size:20.4px;line-height:20.4px;color:#595959;transform-origin:0 0;transform:rotate(-90deg) scaleX(1.0879)">(108, 115]</span>
<span class="t" style="left:395.56px;top:1066.01px;font-size:20.4px;line-height:20.4px;color:#595959;transform-origin:0 0;transform:rotate(-90deg) scaleX(1.0694)">(122, 128]</span>
<span class="t" style="left:423.10px;top:1066.01px;font-size:20.4px;line-height:20.4px;color:#595959;transform-origin:0 0;transform:rotate(-90deg) scaleX(1.0694)">(135, 142]</span>
<span class="t" style="left:450.64px;top:1066.01px;font-size:20.4px;line-height:20.4px;color:#595959;transform-origin:0 0;transform:rotate(-90deg) scaleX(1.0694)">(149, 155]</span>
<span class="t" style="left:478.18px;top:1066.01px;font-size:20.4px;line-height:20.4px;color:#595959;transform-origin:0 0;transform:rotate(-90deg) scaleX(1.0694)">(162, 169]</span>
<span class="t" style="left:505.72px;top:1066.01px;font-size:20.4px;line-height:20.4px;color:#595959;transform-origin:0 0;transform:rotate(-90deg) scaleX(1.0694)">(176, 182]</span>
<span class="t" style="left:533.26px;top:1066.01px;font-size:20.4px;line-height:20.4px;color:#595959;transform-origin:0 0;transform:rotate(-90deg) scaleX(1.0694)">(189, 196]</span>
<span class="t" style="left:560.80px;top:1066.01px;font-size:20.4px;line-height:20.4px;color:#595959;transform-origin:0 0;transform:rotate(-90deg) scaleX(1.0694)">(203, 209]</span>
<span class="t" style="left:588.34px;top:1066.01px;font-size:20.4px;line-height:20.4px;color:#595959;transform-origin:0 0;transform:rotate(-90deg) scaleX(1.0694)">(216, 223]</span>
<span class="t" style="left:615.88px;top:1066.01px;font-size:20.4px;line-height:20.4px;color:#595959;transform-origin:0 0;transform:rotate(-90deg) scaleX(1.0694)">(230, 236]</span>
<span class="t" style="left:643.42px;top:1066.01px;font-size:20.4px;line-height:20.4px;color:#595959;transform-origin:0 0;transform:rotate(-90deg) scaleX(1.0694)">(243, 250]</span>
<span class="t" style="left:670.96px;top:1066.01px;font-size:20.4px;line-height:20.4px;color:#595959;transform-origin:0 0;transform:rotate(-90deg) scaleX(1.0694)">(257, 264]</span>
<span class="t" style="left:698.50px;top:1066.01px;font-size:20.4px;line-height:20.4px;color:#595959;transform-origin:0 0;transform:rotate(-90deg) scaleX(1.0694)">(270, 277]</span>
<span class="t" style="left:726.04px;top:1066.01px;font-size:20.4px;line-height:20.4px;color:#595959;transform-origin:0 0;transform:rotate(-90deg) scaleX(1.0694)">(284, 291]</span>
<span class="t" style="left:753.58px;top:1066.01px;font-size:20.4px;line-height:20.4px;color:#595959;transform-origin:0 0;transform:rotate(-90deg) scaleX(1.0694)">(297, 304]</span>
<span class="t" style="left:781.12px;top:1066.03px;font-size:20.4px;line-height:20.4px;color:#595959;transform-origin:0 0;transform:rotate(-90deg) scaleX(1.0879)">(311, 318]</span>
<span class="t" style="left:808.66px;top:1066.01px;font-size:20.4px;line-height:20.4px;color:#595959;transform-origin:0 0;transform:rotate(-90deg) scaleX(1.0694)">(324, 331]</span>
<span class="t" style="left:836.20px;top:1066.01px;font-size:20.4px;line-height:20.4px;color:#595959;transform-origin:0 0;transform:rotate(-90deg) scaleX(1.0694)">(338, 345]</span>
<span class="t" style="left:863.74px;top:1066.01px;font-size:20.4px;line-height:20.4px;color:#595959;transform-origin:0 0;transform:rotate(-90deg) scaleX(1.0694)">(351, 358]</span>
<span class="t" style="left:891.28px;top:1066.01px;font-size:20.4px;line-height:20.4px;color:#595959;transform-origin:0 0;transform:rotate(-90deg) scaleX(1.0694)">(365, 372]</span>
<span class="t" style="left:918.82px;top:1066.01px;font-size:20.4px;line-height:20.4px;color:#595959;transform-origin:0 0;transform:rotate(-90deg) scaleX(1.0694)">(378, 385]</span>
<span class="t" style="left:946.36px;top:1066.01px;font-size:20.4px;line-height:20.4px;color:#595959;transform-origin:0 0;transform:rotate(-90deg) scaleX(1.0694)">(392, 399]</span>
<span class="t" style="left:973.90px;top:1066.01px;font-size:20.4px;line-height:20.4px;color:#595959;transform-origin:0 0;transform:rotate(-90deg) scaleX(1.0694)">(405, 412]</span>
<span class="t" style="left:1001.44px;top:1066.01px;font-size:20.4px;line-height:20.4px;color:#595959;transform-origin:0 0;transform:rotate(-90deg) scaleX(1.0694)">(419, 426]</span>
<span class="t" style="left:1028.98px;top:1066.01px;font-size:20.4px;line-height:20.4px;color:#595959;transform-origin:0 0;transform:rotate(-90deg) scaleX(1.0694)">(432, 439]</span>
<span class="t" style="left:1056.52px;top:1066.01px;font-size:20.4px;line-height:20.4px;color:#595959;transform-origin:0 0;transform:rotate(-90deg) scaleX(1.0694)">(446, 453]</span>
<span class="t" style="left:1084.06px;top:1066.01px;font-size:20.4px;line-height:20.4px;color:#595959;transform-origin:0 0;transform:rotate(-90deg) scaleX(1.0694)">(459, 466]</span>
<span class="t" style="left:1111.60px;top:1066.01px;font-size:20.4px;line-height:20.4px;color:#595959;transform-origin:0 0;transform:rotate(-90deg) scaleX(1.0694)">(473, 480]</span>
<span class="t" style="left:1139.14px;top:1066.01px;font-size:20.4px;line-height:20.4px;color:#595959;transform-origin:0 0;transform:rotate(-90deg) scaleX(1.0694)">(486, 493]</span>
<span class="t" style="left:1166.68px;top:1022.26px;font-size:20.4px;line-height:20.4px;color:#595959;transform-origin:0 0;transform:rotate(-90deg) scaleX(1.0406)">> 500</span>
<svg style="left:0;top:0" width="1" height="1" fill="none"><path d="M141.9 950.2 H1189.8" stroke="#7a7a7a" stroke-width="1.9"/><path d="M141.9 950.2 V1067.6 H1189.8 V950.2" stroke="#838383" stroke-width="1.6"/></svg>
<svg style="left:0;top:0" width="1" height="1"><circle cx="141.9" cy="950.2" r="5.3" fill="#b3d5f0" stroke="#2b8fe0" stroke-width="1.3"/><circle cx="141.9" cy="1067.6" r="5.3" fill="#b3d5f0" stroke="#2b8fe0" stroke-width="1.3"/><circle cx="1189.8" cy="950.3" r="5.3" fill="#b3d5f0" stroke="#2b8fe0" stroke-width="1.3"/><circle cx="1189.8" cy="1067.7" r="5.3" fill="#b3d5f0" stroke="#2b8fe0" stroke-width="1.3"/><circle cx="69.8" cy="401.4" r="9.6" fill="#fff" stroke="#9a9a9a" stroke-width="3.2"/><circle cx="69.8" cy="741.7" r="9.6" fill="#fff" stroke="#9a9a9a" stroke-width="3.2"/><circle cx="69.8" cy="1082.8" r="9.6" fill="#fff" stroke="#9a9a9a" stroke-width="3.2"/><circle cx="637.5" cy="401.4" r="9.6" fill="#fff" stroke="#9a9a9a" stroke-width="3.2"/><circle cx="637.5" cy="1082.8" r="9.6" fill="#fff" stroke="#9a9a9a" stroke-width="3.2"/><circle cx="1205.7" cy="401.4" r="9.6" fill="#fff" stroke="#9a9a9a" stroke-width="3.2"/><circle cx="1205.7" cy="741.7" r="9.6" fill="#fff" stroke="#9a9a9a" stroke-width="3.2"/><circle cx="1205.7" cy="1082.8" r="9.6" fill="#fff" stroke="#9a9a9a" stroke-width="3.2"/></svg>
<div class="a" style="left:1228.2px;top:400.3px;width:55.6px;height:55.3px;background:#fff;border:2px solid #a6a6a6;"></div>
<div class="a" style="left:1228.2px;top:476.2px;width:55.6px;height:55.3px;background:#fff;border:2px solid #a6a6a6;"></div>
<svg style="left:0;top:0" width="1" height="1"><path d="M1255 406 V448 M1234 427 H1276" stroke="#1f9e48" stroke-width="2.2" fill="none"/><path d="M1250.2 510.2 C1258 501 1268 489 1275.5 484.8 C1278.2 483.6 1278.6 485.6 1277 488.5 C1272 498 1262 508 1254.8 515.5 Z" fill="#fafafa" stroke="#333" stroke-width="1.9"/><path d="M1232.3 518 C1239 517.5 1241 513.5 1243 510.5 C1246 506.8 1252.5 507.8 1254.6 512 C1256.5 517 1253.5 521.8 1247.5 523.3 C1241.5 524.6 1235.5 522 1232.3 518 Z" fill="#83beec" stroke="#1565c0" stroke-width="1.8"/></svg>
<div class="a" style="left:1310.3px;top:339px;width:32.6px;height:1075px;background:#fff;border:2px solid #adadad;"></div>
<div class="a" style="left:1310.3px;top:370px;width:32.6px;height:3.8px;background:#b0b0b0;"></div>
<div class="a" style="left:1312px;top:1347.5px;width:29.2px;height:38.6px;background:#d9d9d9;"></div>
<div class="a" style="left:1310.3px;top:1346px;width:32.6px;height:1.8px;background:#adadad;"></div>
<div class="a" style="left:1310.3px;top:1386px;width:32.6px;height:1.8px;background:#adadad;"></div>
<svg style="left:0;top:0" width="1" height="1"><path d="M1319 359 L1334 359 L1326.5 351 Z" fill="#6d6d6d"/><path d="M1319 1399 L1334 1399 L1326.5 1407 Z" fill="#6d6d6d"/></svg>
<div class="a" style="left:1346px;top:340px;width:1px;height:1068px;background:#c3c3c3;"></div>
<span class="t" style="left:1363.38px;top:359px;font-size:39px;line-height:39px;color:#1a6a3e;transform:scaleX(1.0649);-webkit-text-stroke:0.8px #e6e6e6;">Format Axis</span>
<svg style="left:0;top:0" width="1" height="1"><path d="M1788.3 373.7 L1801.8 373.7 L1795.05 380.4 Z" fill="#666"/><path d="M1869.8 370.3 L1882.6 383.1 M1882.6 370.3 L1869.8 383.1" stroke="#555" stroke-width="3.2"/></svg>
<span class="t" style="left:1374.61px;top:436px;font-size:24px;line-height:24px;color:#222;font-weight:bold;transform:scaleX(0.9807);">Axis Options</span>
<svg style="left:0;top:0" width="1" height="1"><path d="M1534.5 442.8 L1543.3 452 L1552.2 442.8" fill="none" stroke="#2b88d8" stroke-width="2"/></svg>
<div class="a" style="left:1576px;top:429px;width:1px;height:36px;background:#dadada;"></div>
<span class="t" style="left:1586.22px;top:436px;font-size:24px;line-height:24px;color:#333;transform:scaleX(1.0051);">Text Options</span>
<div class="a" style="left:1509px;top:484px;width:60px;height:60px;background:#ababab;"></div>
<div class="a" style="left:1519.8px;top:505.7px;width:11.7px;height:27.1px;background:#217346;"></div>
<div class="a" style="left:1533px;top:494px;width:11.4px;height:38.8px;background:#217346;"></div>
<div class="a" style="left:1546px;top:502.1px;width:11.1px;height:30.7px;background:#217346;"></div>
<svg style="left:0;top:0" width="1" height="1"><path d="M1391.6 508 V500.8 A4.45 4.45 0 0 1 1400.5 500.8" fill="none" stroke="#6d6d6d" stroke-width="1.3"/><path d="M1399.9 500.7 L1413.4 513.9 L1396.5 531.6 L1382.2 517.4 Z" fill="#fff" stroke="#6d6d6d" stroke-width="1.3"/><path d="M1400.5 500.8 V510" fill="none" stroke="#6d6d6d" stroke-width="1.3"/><circle cx="1400.5" cy="511.5" r="2.6" fill="#6d6d6d"/><path d="M1410 511 C1414.5 511.4 1418 514.8 1417.8 519.5 C1417.4 524 1415 528 1413.2 532.5 V514 Z" fill="#6d6d6d"/></svg>
<div class="a" style="left:1455px;top:528px;width:27px;height:7.5px;background:linear-gradient(#fff,rgba(255,255,255,0));clip-path:polygon(8% 0,92% 0,100% 100%,0 100%)"></div>
<svg style="left:0;top:0" width="1" height="1"><path d="M1457.2 528 L1455.3 534 M1479.8 528 L1481.7 534" stroke="#999" stroke-width="1" opacity=".7"/><path d="M1468.5 492.2 L1486.8 505.6 L1479.8 527.5 L1457.2 527.5 L1450.1 505.6 Z" fill="#fff" stroke="#6d6d6d" stroke-width="1.3"/><path d="M1457.2 527.6 H1479.8" stroke="#666" stroke-width="1.9"/></svg>
<svg style="left:0;top:0" width="1" height="1"><path d="M1365 573 H1521.3 L1534 557 L1546.9 573 H1897" fill="none" stroke="#c6c6c6" stroke-width="1.6"/></svg>
<svg style="left:0;top:0" width="1" height="1"><path d="M1393.5 595.9 V607.9 H1381.2 Z" fill="#444"/></svg>
<span class="t" style="left:1409.21px;top:592px;font-size:24px;line-height:24px;color:#217346;font-weight:bold;transform:scaleX(0.9807);">Axis Options</span>
<span class="t" style="left:1407.92px;top:648px;font-size:24px;line-height:24px;color:#444;transform:scaleX(0.9768);">Bins</span>
<svg style="left:0;top:0" width="1" height="1"><circle cx="1442" cy="718.1" r="11.2" fill="#fff" stroke="#ababab" stroke-width="1.4"/></svg>
<span class="t" style="left:1463.82px;top:707px;font-size:24px;line-height:24px;color:#444;transform:scaleX(0.9793);">By Cate<u style="text-decoration-thickness:1.2px;text-underline-offset:2.5px">g</u>ory</span>
<svg style="left:0;top:0" width="1" height="1"><circle cx="1442" cy="766" r="11.2" fill="#fff" stroke="#ababab" stroke-width="1.4"/></svg>
<span class="t" style="left:1465.70px;top:756px;font-size:24px;line-height:24px;color:#444;transform:scaleX(1.0199);">Auto<u style="text-decoration-thickness:1.2px;text-underline-offset:2.5px">m</u>atic</span>
<svg style="left:0;top:0" width="1" height="1"><circle cx="1442" cy="816.2" r="11.2" fill="#fff" stroke="#ababab" stroke-width="1.4"/></svg>
<span class="t" style="left:1463.69px;top:806px;font-size:24px;line-height:24px;color:#444;transform:scaleX(1.0461);"><u style="text-decoration-thickness:1.2px;text-underline-offset:2.5px">B</u>in width</span>
<svg style="left:0;top:0" width="1" height="1"><circle cx="1442" cy="869.6" r="11.2" fill="#fff" stroke="#ababab" stroke-width="1.4"/><circle cx="1442" cy="869.6" r="6.4" fill="#6d6d6d"/></svg>
<span class="t" style="left:1463.70px;top:859px;font-size:24px;line-height:24px;color:#444;transform:scaleX(1.0408);"><u style="text-decoration-thickness:1.2px;text-underline-offset:2.5px">N</u>umber of bins</span>
<div class="a" style="left:1745.9px;top:795.6px;width:125px;height:42.1px;background:#f0f0f0;border:1.5px solid #e2e2e2;"></div>
<span class="t" style="left:1757.51px;top:807px;font-size:20.5px;line-height:20.5px;color:#a3a3a3;transform:scaleX(0.9700);">6.75675</span>
<div class="a" style="left:1745.3px;top:847.6px;width:125px;height:43.6px;background:#fff;border:2px solid #ababab;"></div>
<span class="t" style="left:1757.47px;top:860px;font-size:20.5px;line-height:20.5px;color:#333;transform:scaleX(1.0086);">75</span>
<div class="a" style="left:1429.3px;top:911.4px;width:25.6px;height:25.5px;background:#fff;border:1.4px solid #ababab;"></div><svg style="left:0;top:0" width="1" height="1"><path d="M1434.5 923.9 L1439.8999999999999 930.4 L1449.5 917.1999999999999" fill="none" stroke="#6d6d6d" stroke-width="2.6"/></svg>
<span class="t" style="left:1464.58px;top:914px;font-size:24px;line-height:24px;color:#444;transform:scaleX(1.0344);">O<u style="text-decoration-thickness:1.2px;text-underline-offset:2.5px">v</u>erflow bin</span>
<div class="a" style="left:1637.7px;top:904.8px;width:145px;height:43.3px;background:#fff;border:2px solid #ababab;"></div>
<span class="t" style="left:1650.42px;top:916px;font-size:20.5px;line-height:20.5px;color:#333;transform:scaleX(0.9492);">500.0</span>
<div class="a" style="left:1800px;top:904.5px;width:80px;height:49px;background:#fdfdfd;border:1.3px solid #ababab;"></div>
<span class="t" style="left:1815.48px;top:918px;font-size:24px;line-height:24px;color:#333;transform:scaleX(0.96);">Reset</span>
<div class="a" style="left:1429.3px;top:973px;width:25.6px;height:25.5px;background:#fff;border:1.4px solid #ababab;"></div>
<span class="t" style="left:1463.83px;top:976px;font-size:24px;line-height:24px;color:#444;transform:scaleX(1.0368);"><u style="text-decoration-thickness:1.2px;text-underline-offset:2.5px">U</u>nderflow bin</span>
<div class="a" style="left:1637.7px;top:967px;width:145px;height:42.7px;background:#f0f0f0;border:1.5px solid #e2e2e2;"></div>
<span class="t" style="left:1650.39px;top:979px;font-size:20.5px;line-height:20.5px;color:#a3a3a3;transform:scaleX(0.9825);">-735.0</span>
<span class="t" style="left:1817.40px;top:979px;font-size:24px;line-height:24px;color:#b5b5b5;">Auto</span>
<svg style="left:0;top:0" width="1" height="1"><path d="M1382.6 1055.6 L1392.2 1063.8 L1382.6 1072 Z" fill="none" stroke="#8a8a8a" stroke-width="1.2"/></svg>
<span class="t" style="left:1409.06px;top:1053px;font-size:24px;line-height:24px;color:#333;font-weight:bold;transform:scaleX(0.9925);">Tick Marks</span>
<svg style="left:0;top:0" width="1" height="1"><path d="M1393.2 1109.9 V1121.9 H1380.9 Z" fill="#444"/></svg>
<span class="t" style="left:1408.68px;top:1106px;font-size:24px;line-height:24px;color:#217346;font-weight:bold;transform:scaleX(1.0393);">Number</span>
<span class="t" style="left:1408.12px;top:1150px;font-size:24px;line-height:24px;color:#444;transform:scaleX(0.9860);"><u style="text-decoration-thickness:1.2px;text-underline-offset:2.5px">C</u>ategory</span>
<div class="a" style="left:1409.3px;top:1188.5px;width:451.5px;height:43.4px;background:#fcfcfc;border:2px solid #7fbf9a;"></div>
<div class="a" style="left:1828px;top:1190.5px;width:31px;height:39.4px;background:#d3eedf;border:none;border-left:2px solid #7fbf9a;"></div>
<svg style="left:0;top:0" width="1" height="1"><path d="M1837 1206.1 L1851.7 1206.1 L1844.35 1214 Z" fill="#444"/></svg>
<span class="t" style="left:1420.18px;top:1200px;font-size:24px;line-height:24px;color:#333;transform:scaleX(1.0510);">Number</span>
<span class="t" style="left:1427.70px;top:1256px;font-size:24px;line-height:24px;color:#444;transform:scaleX(0.9893);"><u style="text-decoration-thickness:1.2px;text-underline-offset:2.5px">D</u>ecimal places:</span>
<div class="a" style="left:1612.5px;top:1244.8px;width:91px;height:43.4px;background:#fff;border:2px solid #ababab;"></div>
<span class="t" style="left:1624.64px;top:1256px;font-size:20.5px;line-height:20.5px;color:#333;transform:scaleX(1.0656);">0</span>
<div class="a" style="left:1429.3px;top:1304.3px;width:25.6px;height:25.5px;background:#fff;border:1.4px solid #ababab;"></div><svg style="left:0;top:0" width="1" height="1"><path d="M1434.5 1316.8 L1439.8999999999999 1323.3 L1449.5 1310.1" fill="none" stroke="#6d6d6d" stroke-width="2.6"/></svg>
<span class="t" style="left:1463.87px;top:1306px;font-size:24px;line-height:24px;color:#444;transform:scaleX(0.9633);"><u style="text-decoration-thickness:1.2px;text-underline-offset:2.5px">U</u>se 1000 Separator (,)</span>
<span class="t" style="left:1427.64px;top:1359px;font-size:24px;line-height:24px;color:#444;transform:scaleX(1.0213);"><u style="text-decoration-thickness:1.2px;text-underline-offset:2.5px">N</u>egative numbers:</span>
<div class="a" style="left:1863.3px;top:583.3px;width:52.7px;height:824.7px;background:#e6e6e6;"></div>
<div class="a" style="left:1863.5px;top:583.3px;width:32.4px;height:811px;background:#d9d9d9;"></div>
<div class="a" style="left:1863.5px;top:583.3px;width:32.4px;height:590px;background:#fff;border:2px solid #adadad;"></div>
<div class="a" style="left:1863.5px;top:613.5px;width:32.4px;height:3.8px;background:#b0b0b0;"></div>
<div class="a" style="left:1863.5px;top:1362.5px;width:32.4px;height:31.6px;background:#fff;border:2px solid #adadad;"></div>
<svg style="left:0;top:0" width="1" height="1"><path d="M1872.2 602.8 L1887.2 602.8 L1879.7 594.8 Z" fill="#6d6d6d"/><path d="M1872.2 1375.2 L1887.2 1375.2 L1879.7 1382.9 Z" fill="#6d6d6d"/></svg>
<div class="a" style="left:1366.5px;top:1396px;width:495px;height:12px;background:#d9d9d9;"></div>
<div class="a" style="left:1366.5px;top:1396px;width:31px;height:20px;background:#fff;border:2px solid #adadad;"></div>
<div class="a" style="left:1399.5px;top:1396px;width:401px;height:20px;background:#fff;border:2px solid #adadad;"></div>
<div class="a" style="left:1829.5px;top:1396px;width:32px;height:20px;background:#fff;border:2px solid #adadad;"></div>
<svg style="left:0;top:0" width="1" height="1"><path d="M1386 1404.5 L1380 1410.5 H1386 Z M1842 1404.5 L1848 1410.5 H1842 Z" fill="#6d6d6d"/></svg>
<span class="t" style="left:1595.20px;top:1384px;font-size:20px;line-height:20px;color:rgba(120,120,120,0.75);transform:scaleX(0.9968);">Activate Windows</span>
<div class="a" style="left:1309px;top:1080.8px;width:56px;height:56px;border-radius:50%;background:#f4364c;box-shadow:0 3px 5px rgba(0,0,0,0.28)"></div><span class="t" style="left:1326.92px;top:1090px;font-size:38.5px;line-height:38.5px;color:#fff;font-weight:bold;transform:scaleX(0.8120);">1</span>
<div class="a" style="left:1339.3px;top:1189.5px;width:56px;height:56px;border-radius:50%;background:#f4364c;box-shadow:0 3px 5px rgba(0,0,0,0.28)"></div><span class="t" style="left:1355.38px;top:1199px;font-size:38.5px;line-height:38.5px;color:#fff;font-weight:bold;transform:scaleX(1.1391);">2</span>
<div class="a" style="left:1722px;top:1242.3px;width:56px;height:56px;border-radius:50%;background:#f4364c;box-shadow:0 3px 5px rgba(0,0,0,0.28)"></div><span class="t" style="left:1738.44px;top:1252px;font-size:38.5px;line-height:38.5px;color:#fff;font-weight:bold;transform:scaleX(1.1215);">3</span>
</body></html>
